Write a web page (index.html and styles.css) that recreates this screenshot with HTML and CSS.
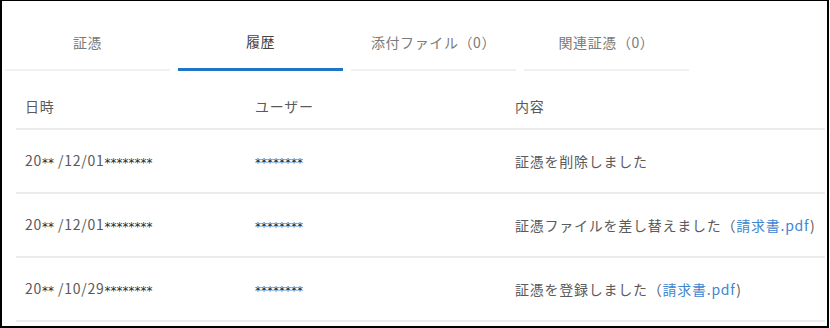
FILE: index.html
```html
<!DOCTYPE html>
<html lang="ja">
<head>
<meta charset="utf-8">
<title>履歴</title>
<link rel="stylesheet" href="styles.css">
</head>
<body>
<div class="frame">
  <div class="tabs">
    <div class="tab">証憑</div>
    <div class="tab active">履歴</div>
    <div class="tab">添付ファイル（0）</div>
    <div class="tab">関連証憑（0）</div>
  </div>
  <div class="table">
    <div class="row head">
      <div class="cell">日時</div>
      <div class="cell">ユーザー</div>
      <div class="cell">内容</div>
    </div>
    <div class="row">
      <div class="cell">20<span class="mask">**</span> /12/01<span class="mask">********</span></div>
      <div class="cell"><span class="mask">********</span></div>
      <div class="cell">証憑を削除しました</div>
    </div>
    <div class="row">
      <div class="cell">20<span class="mask">**</span> /12/01<span class="mask">********</span></div>
      <div class="cell"><span class="mask">********</span></div>
      <div class="cell">証憑ファイルを差し替えました（<a class="link" href="#">請求書.pdf</a>)</div>
    </div>
    <div class="row">
      <div class="cell">20<span class="mask">**</span> /10/29<span class="mask">********</span></div>
      <div class="cell"><span class="mask">********</span></div>
      <div class="cell">証憑を登録しました（<a class="link" href="#">請求書.pdf</a>)</div>
    </div>
  </div>
</div>
</body>
</html>
```

FILE: styles.css
```css
html, body {
  margin: 0;
  padding: 0;
  background: #fff;
}
body {
  font-family: "Noto Sans CJK JP", "Noto Sans", sans-serif;
  color: #555;
}
.frame {
  box-sizing: border-box;
  width: 829px;
  height: 328px;
  border-style: solid;
  border-color: #000;
  border-width: 1px 2px 2px 2px;
  overflow: hidden;
}
.tabs {
  display: flex;
  gap: 8px;
  padding-left: 3px;
}
.tab {
  box-sizing: border-box;
  width: 165px;
  height: 70px;
  padding-top: 13px;
  display: flex;
  align-items: center;
  justify-content: center;
  font-size: 14px;
  color: #7a7a7a;
  letter-spacing: 0.6px;
  border-bottom: 2px solid #f1f1f1;
}
.tab.active {
  color: #444;
  border-bottom: 3px solid #1f74c6;
  padding-top: 12px;
}
.table {
  margin: 0 2px 0 14px;
}
.row {
  display: grid;
  grid-template-columns: 230px 260px 1fr;
  height: 64px;
  box-sizing: border-box;
  border-bottom: 2px solid #ececec;
  align-items: center;
  font-size: 14px;
  letter-spacing: 0.75px;
  color: #5a5a5a;
}
.row.head {
  height: 59px;
  padding-top: 13px;
}
.cell {
  padding-left: 9px;
  white-space: nowrap;
  line-height: 20px;
}
.mask {
  font-family: "DejaVu Sans", sans-serif;
  font-size: 12px;
  letter-spacing: 0;
  color: #2a2a2a;
  position: relative;
  top: 1px;
}
.link {
  color: #3d87d1;
  text-decoration: none;
}
```
